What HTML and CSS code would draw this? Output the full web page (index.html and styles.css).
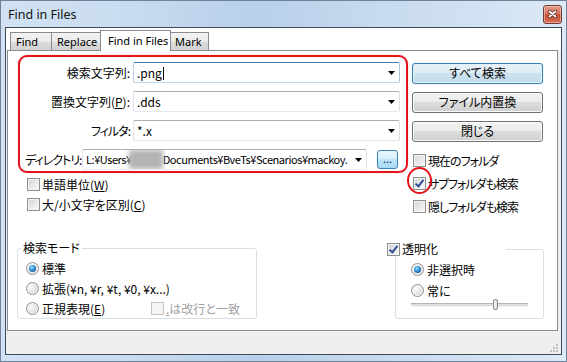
FILE: index.html
```html
<!DOCTYPE html>
<html lang="ja">
<head>
    <meta charset="UTF-8">
    <title>Find in Files</title>
    <link rel="stylesheet" href="styles.css">
</head>
<body>
    <div class="window">
        <div class="titlebar">
            <span class="title">Find in Files</span>
            <span class="close-btn">
                <svg width="9" height="8" viewBox="0 0 9 8">
                    <path d="M1.5 1.5 L7.5 6.5 M7.5 1.5 L1.5 6.5" stroke="#5a2a20" stroke-width="3.4" stroke-linecap="round"/>
                    <path d="M1.5 1.5 L7.5 6.5 M7.5 1.5 L1.5 6.5" stroke="#fff" stroke-width="1.8" stroke-linecap="round"/>
                </svg>
            </span>
        </div>

        <div class="client">
            <div class="tabs">
                <span class="tab tab-find">Find</span>
                <span class="tab tab-replace">Replace</span>
                <span class="tab tab-files active">Find in Files</span>
                <span class="tab tab-mark">Mark</span>
            </div>

            <div class="panel">
                <div class="upper">
                    <div class="search-col">
                        <div class="field-row">
                            <label class="field-label">検索文字列:</label>
                            <div class="combo focused">
                                <span class="combo-text">.png<i class="caret"></i></span>
                                <svg class="combo-arrow" width="7" height="4" viewBox="0 0 7 4"><path d="M0 0 H7 L3.5 4 Z" fill="#000"/></svg>
                            </div>
                        </div>
                        <div class="field-row">
                            <label class="field-label">置換文字列(<u>P</u>):</label>
                            <div class="combo">
                                <span class="combo-text">.dds</span>
                                <svg class="combo-arrow" width="7" height="4" viewBox="0 0 7 4"><path d="M0 0 H7 L3.5 4 Z" fill="#000"/></svg>
                            </div>
                        </div>
                        <div class="field-row">
                            <label class="field-label kana">フィルタ:</label>
                            <div class="combo">
                                <span class="combo-text">*.x</span>
                                <svg class="combo-arrow" width="7" height="4" viewBox="0 0 7 4"><path d="M0 0 H7 L3.5 4 Z" fill="#000"/></svg>
                            </div>
                        </div>
                        <div class="dir-row">
                            <label class="dir-label kana">ディレクトリ:</label>
                            <div class="combo dir-combo">
                                <span class="combo-text">L:¥Users¥<span class="blurred"></span>Documents¥BveTs¥Scenarios¥mackoy.</span>
                                <svg class="combo-arrow" width="7" height="4" viewBox="0 0 7 4"><path d="M0 0 H7 L3.5 4 Z" fill="#000"/></svg>
                            </div>
                            <span class="browse-btn">...</span>
                        </div>

                        <div class="opt-checks">
                            <div class="check"><span class="box"></span><span>単語単位(<u>W</u>)</span></div>
                            <div class="check"><span class="box"></span><span>大/小文字を区別(<u>C</u>)</span></div>
                        </div>
                    </div>

                    <div class="side-col">
                        <span class="btn default">すべて検索</span>
                        <span class="btn">ファイル内置換</span>
                        <span class="btn">閉じる</span>
                        <div class="side-checks kana">
                            <div class="check"><span class="box"></span><span>現在のフォルダ</span></div>
                            <div class="check"><span class="box checked"></span><span>サブフォルダも検索</span></div>
                            <div class="check"><span class="box"></span><span>隠しフォルダも検索</span></div>
                        </div>
                    </div>
                </div>

                <div class="lower">
                    <fieldset class="group mode-group">
                        <legend>検索モード</legend>
                        <div class="radio-row"><span class="radio selected"></span><span>標準</span></div>
                        <div class="radio-row"><span class="radio"></span><span>拡張(¥n, ¥r, ¥t, ¥0, ¥x...)</span></div>
                        <div class="radio-row">
                            <span class="radio-item"><span class="radio"></span><span>正規表現(<u>E</u>)</span></span>
                            <span class="check disabled"><span class="box"></span><span><u>.</u>は改行と一致</span></span>
                        </div>
                    </fieldset>

                    <fieldset class="group trans-group">
                        <legend><span class="check"><span class="box checked"></span><span>透明化</span></span></legend>
                        <div class="radio-row"><span class="radio selected"></span><span>非選択時</span></div>
                        <div class="radio-row"><span class="radio"></span><span>常に</span></div>
                        <div class="slider"><span class="thumb"></span></div>
                    </fieldset>
                </div>

                <div class="mark-rect"></div>
                <div class="mark-circle"></div>
            </div>

            <div class="statusbar">
                <svg class="grip" width="10" height="10" viewBox="0 0 10 10">
                    <rect x="7" y="1" width="2" height="2" fill="#c2c2c2"/>
                    <rect x="4" y="4" width="2" height="2" fill="#c2c2c2"/>
                    <rect x="7" y="4" width="2" height="2" fill="#c2c2c2"/>
                    <rect x="1" y="7" width="2" height="2" fill="#c2c2c2"/>
                    <rect x="4" y="7" width="2" height="2" fill="#c2c2c2"/>
                    <rect x="7" y="7" width="2" height="2" fill="#c2c2c2"/>
                </svg>
            </div>
        </div>
    </div>
</body>
</html>
```

FILE: styles.css
```css
* {
    box-sizing: border-box;
}
body {
    margin: 0;
    width: 567px;
    height: 362px;
    overflow: hidden;
    font-family: "Noto Sans CJK JP", sans-serif;
    font-size: 12px;
    font-feature-settings: "palt";
    text-autospace: no-autospace;
    color: #000;
}
.kana {
    letter-spacing: -1px;
}
.window {
    width: 567px;
    height: 362px;
    display: flex;
    flex-direction: column;
    padding: 0 4px 6px 4px;
    border: 1px solid #6f8298;
    background: linear-gradient(90deg, #d2e2f4 0%, #cadcf0 20%, #b8d0ea 45%, #c9dbef 70%, #dce9f6 100%);
}
.titlebar {
    height: 26px;
    display: flex;
    align-items: center;
    padding-left: 3px;
}
.title {
    font-family: "Noto Sans", sans-serif;
    font-size: 12.5px;
    color: #111;
}
.close-btn {
    margin-left: auto;
    width: 19px;
    height: 19px;
    display: flex;
    align-items: center;
    justify-content: center;
    border: 1px solid #6d3b33;
    border-radius: 3px;
    background: linear-gradient(#e3a08e 0%, #d66f58 45%, #c24a30 55%, #d9735a 100%);
    box-shadow: inset 0 0 0 1px rgba(255, 220, 210, 0.5);
}

.client {
    flex: 1;
    display: flex;
    flex-direction: column;
    border: 1px solid #3d4a5a;
    background: #f0efee;
}
.tabs {
    height: 22px;
    display: flex;
    align-items: flex-end;
    padding-left: 4px;
    background: #fff;
}
.tab {
    height: 18px;
    margin-right: -1px;
    padding-left: 5px;
    border: 1px solid #898c95;
    border-bottom: none;
    font-family: "Noto Sans", sans-serif;
    font-size: 11px;
    line-height: 17px;
    background: linear-gradient(#f3f3f3 0%, #ebebeb 50%, #dddddd 50%, #d2d2d2 100%);
    white-space: nowrap;
}
.tab-find { width: 42px; }
.tab-replace { width: 50px; }
.tab-mark { width: 39px; padding-left: 4px; }
.tab.active {
    width: 71px;
    height: 21px;
    margin-bottom: -1px;
    padding-left: 7px;
    background: #fff;
    line-height: 19px;
    position: relative;
    z-index: 1;
}

.panel {
    position: relative;
    width: 551px;
    height: 281px;
    margin-left: 1px;
    border: 1px solid #898c95;
    background: #fff;
}
.upper {
    display: flex;
    height: 190px;
}
.search-col {
    width: 404px;
    padding: 11px 0 0 17px;
}
.field-row {
    display: flex;
    align-items: center;
    height: 21px;
    margin-bottom: 8px;
}
.field-label {
    width: 105px;
    text-align: right;
}
.combo {
    width: 267px;
    height: 21px;
    margin-left: 3px;
    display: flex;
    align-items: center;
    padding: 0 4px 0 3px;
    border: 1px solid;
    border-color: #abadb3 #dbdfe6 #e3e9ef #e2e3ea;
    border-radius: 2px;
    background: #fff;
    overflow: hidden;
}
.combo.focused {
    border-color: #3d7bad #a4c9e3 #b7d9ed #b5cfe7;
}
.combo-text {
    flex: 1;
    white-space: nowrap;
    overflow: hidden;
    letter-spacing: 0;
}
.caret {
    display: inline-block;
    width: 1px;
    height: 13px;
    margin-left: 1px;
    vertical-align: -2px;
    background: #000;
}
.combo-arrow {
    flex: none;
    margin-left: 4px;
}
.dir-row {
    display: flex;
    align-items: center;
    height: 21px;
}
.dir-label {
    width: 57px;
    white-space: nowrap;
}
.dir-combo {
    width: 285px;
    margin-left: 0;
}
.dir-combo .combo-text {
    font-size: 11px;
    letter-spacing: -0.45px;
}
.blurred {
    display: inline-block;
    width: 34px;
    height: 19px;
    margin-left: -3px;
    vertical-align: -5px;
    background: #b4b4b4;
    filter: blur(2px);
}
.browse-btn {
    width: 21px;
    height: 19px;
    margin-left: 10px;
    border: 1px solid #3c7fb1;
    border-radius: 3px;
    background: linear-gradient(#eaf6fd 0%, #d9f0fc 50%, #bee6fd 50%, #a7d9f5 100%);
    font-size: 11px;
    line-height: 14px;
    text-align: center;
    color: #1a2c44;
}

.check {
    display: flex;
    align-items: center;
    gap: 2px;
    height: 13px;
    white-space: nowrap;
}
.box {
    flex: none;
    width: 13px;
    height: 13px;
    border: 1px solid #8e8f8f;
    background: linear-gradient(135deg, #d2d2d2 0%, #ececec 60%, #fbfbfb 100%);
    box-shadow: inset 0 0 0 1px #f4f4f4;
    position: relative;
}
.box.checked::after {
    content: "";
    position: absolute;
    left: 3px;
    top: 0px;
    width: 3px;
    height: 7px;
    border: solid #304e9a;
    border-width: 0 2px 2px 0;
    transform: rotate(38deg);
}
.check.disabled {
    color: #a0a0a0;
}
.check.disabled .box {
    border-color: #c4c4c4;
    background: #f4f4f4;
}
.opt-checks {
    display: flex;
    flex-direction: column;
    gap: 7px;
    margin-top: 8px;
    padding-left: 2px;
}

.side-col {
    width: 131px;
    padding-top: 12px;
    display: flex;
    flex-direction: column;
}
.btn {
    height: 21px;
    margin-bottom: 8px;
    border: 1px solid #707070;
    border-radius: 3px;
    background: linear-gradient(#f2f2f2 0%, #ebebeb 50%, #dddddd 50%, #cfcfcf 100%);
    box-shadow: inset 0 0 0 1px #fcfcfc;
    text-align: center;
    line-height: 18px;
}
.btn.default {
    border-color: #3c7fb1;
    background: linear-gradient(#eaf3f9 0%, #dcebf4 50%, #cde2ef 50%, #c2dbeb 100%);
    box-shadow: inset 0 0 0 1px #dff2fc, 0 0 1px #7ab8e6;
}
.side-checks {
    display: flex;
    flex-direction: column;
    gap: 10px;
    margin-top: 4px;
    padding-left: 1px;
}

.lower {
    display: flex;
    align-items: flex-start;
}
.group {
    margin: 0;
    border: 1px solid #d5dfe5;
    border-radius: 3px;
    min-width: 0;
}
.group legend {
    padding: 0 2px;
    line-height: 14px;
}
.mode-group {
    width: 240px;
    height: 78px;
    margin-left: 9px;
    padding: 7px 0 0 8px;
}
.mode-group legend {
    margin-left: -5px;
}
.trans-group {
    width: 149px;
    height: 77px;
    margin: 1px 13px 0 auto;
    padding: 7px 0 0 15px;
}
.trans-group legend {
    width: 119px;
    margin-left: -24px;
    padding: 0;
    background: #fff;
}
.trans-group legend .check {
    height: 14px;
}
.radio-row {
    display: flex;
    align-items: center;
    gap: 3px;
    height: 13px;
    margin-bottom: 7px;
    white-space: nowrap;
}
.trans-group .radio-row {
    margin-bottom: 8px;
}
.radio-item {
    width: 122px;
    display: flex;
    align-items: center;
    gap: 3px;
}
.radio {
    flex: none;
    width: 13px;
    height: 13px;
    border-radius: 50%;
    border: 1px solid #8e8f8f;
    background: radial-gradient(circle at 35% 35%, #fbfbfb 0%, #e4e4e4 50%, #c9c9c9 100%);
    box-shadow: inset 0 0 0 1px #f6f6f6;
    position: relative;
}
.radio.selected::after {
    content: "";
    position: absolute;
    left: 2px;
    top: 2px;
    width: 7px;
    height: 7px;
    border-radius: 50%;
    background: radial-gradient(circle at 40% 35%, #9fe0ff 0%, #2f8fd0 45%, #0d4a84 100%);
}
.slider {
    position: relative;
    width: 117px;
    height: 12px;
    margin-top: -7px;
}
.slider::before {
    content: "";
    position: absolute;
    left: 0;
    right: 0;
    top: 5px;
    height: 2px;
    border-top: 1px solid #b5b5b5;
    border-bottom: 1px solid #f4f4f4;
    background: #dedede;
}
.thumb {
    position: absolute;
    left: 82px;
    top: 1px;
    width: 5px;
    height: 11px;
    border: 1px solid #8a8a8a;
    border-radius: 2px;
    background: linear-gradient(90deg, #f8f8f8, #dcdcdc);
}

.mark-rect {
    position: absolute;
    left: 10px;
    top: 4px;
    width: 390px;
    height: 118px;
    border: 2px solid #e3141c;
    border-radius: 9px;
    box-shadow: 0 0 1px #ff6060;
}
.mark-circle {
    position: absolute;
    left: 399px;
    top: 116px;
    width: 25px;
    height: 27px;
    border: 2px solid #e3141c;
    border-radius: 50%;
}

.statusbar {
    flex: 1;
    display: flex;
    justify-content: flex-end;
    align-items: flex-end;
    padding: 0 2px 1px 0;
}
```
